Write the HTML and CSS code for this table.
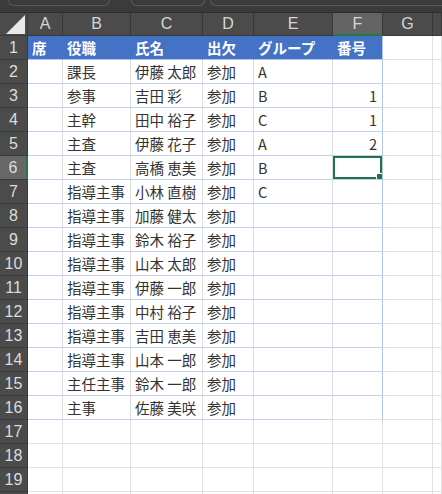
FILE: index.html
```html
<!DOCTYPE html>
<html lang="ja">
<head>
<meta charset="utf-8">
<link rel="stylesheet" href="styles.css">
</head>
<body>
<div class="sheet">
  <div class="toolbar">
    <div class="tb tb1"></div>
    <div class="tb tb2"></div>
    <div class="tb tb3"></div>
  </div>
  <div class="row colhead">
    <div class="c rh corner"><span class="tri"></span></div>
    <div class="c a">A</div><div class="c b">B</div><div class="c cc">C</div><div class="c d">D</div><div class="c e">E</div><div class="c f sel">F</div><div class="c g">G</div><div class="c h"></div>
  </div>
  <div class="row hdr">
    <div class="c rh">1</div>
    <div class="c a">席</div><div class="c b">役職</div><div class="c cc">氏名</div><div class="c d">出欠</div><div class="c e">グループ</div><div class="c f">番号</div><div class="c g"></div><div class="c h"></div>
  </div>
  <div class="row tbl">
    <div class="c rh">2</div>
    <div class="c a"></div><div class="c b">課長</div><div class="c cc">伊藤 太郎</div><div class="c d">参加</div><div class="c e">A</div><div class="c f"></div><div class="c g"></div><div class="c h"></div>
  </div>
  <div class="row tbl">
    <div class="c rh">3</div>
    <div class="c a"></div><div class="c b">参事</div><div class="c cc">吉田 彩</div><div class="c d">参加</div><div class="c e">B</div><div class="c f num">1</div><div class="c g"></div><div class="c h"></div>
  </div>
  <div class="row tbl">
    <div class="c rh">4</div>
    <div class="c a"></div><div class="c b">主幹</div><div class="c cc">田中 裕子</div><div class="c d">参加</div><div class="c e">C</div><div class="c f num">1</div><div class="c g"></div><div class="c h"></div>
  </div>
  <div class="row tbl">
    <div class="c rh">5</div>
    <div class="c a"></div><div class="c b">主査</div><div class="c cc">伊藤 花子</div><div class="c d">参加</div><div class="c e">A</div><div class="c f num">2</div><div class="c g"></div><div class="c h"></div>
  </div>
  <div class="row tbl">
    <div class="c rh rsel">6</div>
    <div class="c a"></div><div class="c b">主査</div><div class="c cc">高橋 恵美</div><div class="c d">参加</div><div class="c e">B</div><div class="c f active"><span class="handle"></span></div><div class="c g"></div><div class="c h"></div>
  </div>
  <div class="row tbl">
    <div class="c rh">7</div>
    <div class="c a"></div><div class="c b">指導主事</div><div class="c cc">小林 直樹</div><div class="c d">参加</div><div class="c e">C</div><div class="c f"></div><div class="c g"></div><div class="c h"></div>
  </div>
  <div class="row tbl">
    <div class="c rh">8</div>
    <div class="c a"></div><div class="c b">指導主事</div><div class="c cc">加藤 健太</div><div class="c d">参加</div><div class="c e"></div><div class="c f"></div><div class="c g"></div><div class="c h"></div>
  </div>
  <div class="row tbl">
    <div class="c rh">9</div>
    <div class="c a"></div><div class="c b">指導主事</div><div class="c cc">鈴木 裕子</div><div class="c d">参加</div><div class="c e"></div><div class="c f"></div><div class="c g"></div><div class="c h"></div>
  </div>
  <div class="row tbl">
    <div class="c rh">10</div>
    <div class="c a"></div><div class="c b">指導主事</div><div class="c cc">山本 太郎</div><div class="c d">参加</div><div class="c e"></div><div class="c f"></div><div class="c g"></div><div class="c h"></div>
  </div>
  <div class="row tbl">
    <div class="c rh">11</div>
    <div class="c a"></div><div class="c b">指導主事</div><div class="c cc">伊藤 一郎</div><div class="c d">参加</div><div class="c e"></div><div class="c f"></div><div class="c g"></div><div class="c h"></div>
  </div>
  <div class="row tbl">
    <div class="c rh">12</div>
    <div class="c a"></div><div class="c b">指導主事</div><div class="c cc">中村 裕子</div><div class="c d">参加</div><div class="c e"></div><div class="c f"></div><div class="c g"></div><div class="c h"></div>
  </div>
  <div class="row tbl">
    <div class="c rh">13</div>
    <div class="c a"></div><div class="c b">指導主事</div><div class="c cc">吉田 恵美</div><div class="c d">参加</div><div class="c e"></div><div class="c f"></div><div class="c g"></div><div class="c h"></div>
  </div>
  <div class="row tbl">
    <div class="c rh">14</div>
    <div class="c a"></div><div class="c b">指導主事</div><div class="c cc">山本 一郎</div><div class="c d">参加</div><div class="c e"></div><div class="c f"></div><div class="c g"></div><div class="c h"></div>
  </div>
  <div class="row tbl">
    <div class="c rh">15</div>
    <div class="c a"></div><div class="c b">主任主事</div><div class="c cc">鈴木 一郎</div><div class="c d">参加</div><div class="c e"></div><div class="c f"></div><div class="c g"></div><div class="c h"></div>
  </div>
  <div class="row tbl last">
    <div class="c rh">16</div>
    <div class="c a"></div><div class="c b">主事</div><div class="c cc">佐藤 美咲</div><div class="c d">参加</div><div class="c e"></div><div class="c f"></div><div class="c g"></div><div class="c h"></div>
  </div>
  <div class="row">
    <div class="c rh">17</div>
    <div class="c a"></div><div class="c b"></div><div class="c cc"></div><div class="c d"></div><div class="c e"></div><div class="c f"></div><div class="c g"></div><div class="c h"></div>
  </div>
  <div class="row">
    <div class="c rh">18</div>
    <div class="c a"></div><div class="c b"></div><div class="c cc"></div><div class="c d"></div><div class="c e"></div><div class="c f"></div><div class="c g"></div><div class="c h"></div>
  </div>
  <div class="row">
    <div class="c rh">19</div>
    <div class="c a"></div><div class="c b"></div><div class="c cc"></div><div class="c d"></div><div class="c e"></div><div class="c f"></div><div class="c g"></div><div class="c h"></div>
  </div>
  <div class="row">
    <div class="c rh"></div>
    <div class="c a"></div><div class="c b"></div><div class="c cc"></div><div class="c d"></div><div class="c e"></div><div class="c f"></div><div class="c g"></div><div class="c h"></div>
  </div>
</div>
</body>
</html>
```
FILE: styles.css
```css
html, body {
  margin: 0;
  padding: 0;
  background: #ffffff;
  overflow: hidden;
}
.sheet {
  width: 442px;
  height: 494px;
  overflow: hidden;
  font-family: "Noto Sans CJK JP", "Noto Sans", sans-serif;
  font-size: 14.5px;
  color: #333333;
}
.toolbar {
  height: 12px;
  background: #3b3b3b;
  border-bottom: 1px solid #2c2c2c;
  display: flex;
  align-items: flex-start;
  padding-left: 8px;
  gap: 21px;
}
.tb {
  height: 5px;
  border: 1px solid #595959;
  border-top: none;
  border-radius: 0 0 6px 6px;
}
.tb1 { width: 100px; }
.tb2 { width: 72px; margin-right: -16px; }
.tb3 { flex: 1; border-right: none; border-radius: 0 0 0 6px; }
.row {
  display: flex;
  height: 24px;
}
.c {
  box-sizing: border-box;
  height: 100%;
  border-right: 1px solid #e1e1e1;
  border-bottom: 1px solid #e1e1e1;
  padding-left: 4px;
  line-height: 23px;
  white-space: nowrap;
  overflow: hidden;
  flex: none;
}
.rh { width: 28px; }
.a { width: 35px; }
.b { width: 68px; }
.cc { width: 72px; }
.d { width: 51px; }
.e { width: 79px; }
.f { width: 50px; }
.g { width: 50px; }
.h { flex: 1; }

.c.rh {
  background: #4b4b4b;
  color: #dcdcdc;
  border-right: 1px solid #3a3a3a;
  border-bottom: 1px solid #3a3a3a;
  font-family: "Liberation Sans", sans-serif;
  font-size: 16px;
  text-align: center;
  padding: 0;
}
.c.rh.rsel {
  background: #676767;
  border-right: 2px solid #1f7a45;
}
.colhead {
  height: 23px;
}
.colhead .c {
  background: #4b4b4b;
  color: #d6d6d6;
  border-right: 1px solid #383838;
  border-bottom: 1px solid #383838;
  font-family: "Liberation Sans", sans-serif;
  font-size: 16px;
  text-align: center;
  padding: 0;
  line-height: 22px;
}
.colhead .c.sel {
  background: #646464;
  border-bottom: 2px solid #1f7a45;
}
.corner {
  position: relative;
}
.tri {
  position: absolute;
  right: 2px;
  bottom: 1px;
  width: 0;
  height: 0;
  border-left: 19px solid transparent;
  border-bottom: 19px solid #e8e8e8;
}
.hdr .c:not(.rh) {
  background: #4472c4;
  color: #ffffff;
  font-weight: bold;
  border-right-color: #4472c4;
  border-bottom: 1px solid #b4c6e7;
}
.hdr .c.f {
  border-right: 1px solid #b4c6e7;
}
.hdr .c.g, .hdr .c.h {
  background: #ffffff;
  border-right-color: #e1e1e1;
  border-bottom-color: #e1e1e1;
}
.tbl .c.a, .tbl .c.b, .tbl .c.cc, .tbl .c.d, .tbl .c.e, .tbl .c.f {
  border-bottom-color: #c3cfec;
  border-right-color: #dcdcdc;
}
.tbl .c.f {
  border-right-color: #b4c6e7;
}
.tbl.last .c.f {
  border-bottom-color: #e1e1e1;
}
.num {
  text-align: right;
  padding-right: 5px;
}
.active {
  position: relative;
  box-shadow: inset 0 0 0 2px #217346;
}
.handle {
  position: absolute;
  right: -1px;
  bottom: -1px;
  width: 5px;
  height: 5px;
  background: #217346;
  border: 1px solid #ffffff;
}
```
